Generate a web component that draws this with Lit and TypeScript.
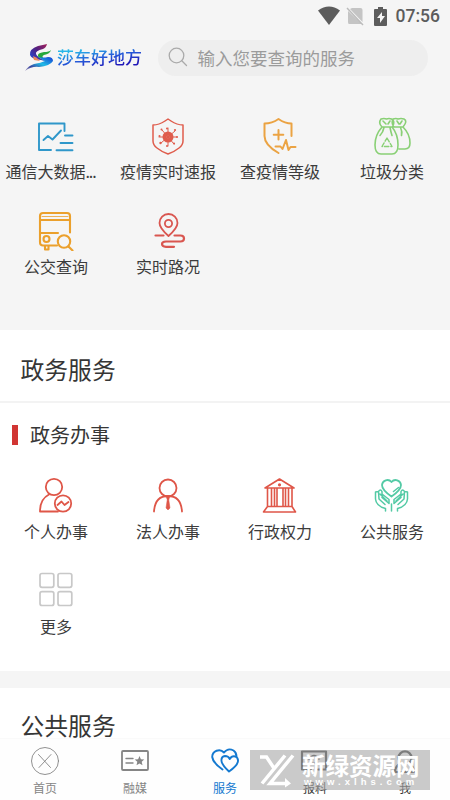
import { LitElement, html, css, svg } from "lit";
import { customElement, property } from "lit/decorators.js";
import { styleMap } from "lit/directives/style-map.js";

// Service icons share a 40x42 canvas and take their colour from the item.
const icons: Record<string, unknown> = {
  data: svg`<g stroke-width="1.900"><path d="M15 36H3V9.500H28.500V17M7.500 26l4.500-4 4.500 3.500L25 16.500M29 21.500h7.500M24.500 29H36.500M20.500 36.300h16"/></g>`,
  virus: svg`<path stroke-width="1.500" d="M20 5l-3 2q-6 4-12 4v16q0 4 4 7 5 4 11 6 6-2 11-6 4-3 4-7V11q-6 0-12-4z"/><circle cx="20" cy="23" r="5.500" fill="currentColor" stroke="none"/><circle cx="20" cy="23" r="1.300" fill="#f5f5f5" stroke="none"/><path stroke-width="1" d="M20 23V14M20 23l7-6M20 23h9M20 23l6 7M20 23v9M20 23l-7 6M20 23h-9M20 23l-6-7"/><g fill="currentColor" stroke="none"><circle cx="19" cy="14.500" r="1"/><circle cx="27" cy="16" r="1.100"/><circle cx="29" cy="23" r="1"/><circle cx="26" cy="29.500" r="1.100"/><circle cx="19" cy="32" r="1"/><circle cx="12.500" cy="29" r="1.200"/><circle cx="11.500" cy="22" r="1"/><circle cx="13.500" cy="15.500" r="1"/></g>`,
  level: svg`<g stroke-width="2"><path d="M31.500 22V9.500Q25 9.500 18.500 5 12 9.500 4.500 9.500V22q0 9 14 17M18.500 16v9.500M13.700 20.700h9.600M15.500 32.500h5l2 2.500 3.500-9 2.500 10 2-3h5"/></g>`,
  bags: svg`<g stroke-width="1.600"><path d="M10 13q-7 8-7 18 0 9 6 9h11q6 0 6-9 0-11-6-18zM10 13Q6 9 9 5q3-1 5.500 0 2.500-1 5 0 4 2 1 8M22 13q-3-4-1-8 3-1 5 0 3-1 6 0 4 2-1 8h-9M31 13q7 7 7 16 0 6-5 6h-6M12 13.500q-1 5-4 8M18 13.500q1 5 2 8M28.500 13.500q2 4 1 8M11 7l3 3M18 7l-2 3M25 7l2 3M30 7l-2 3"/><path stroke-width="1.400" stroke-dasharray="4.500 2" d="M15 24l5 8.500H10z"/></g>`,
  bus: svg`<g stroke-width="2.100"><path d="M21 36.500H7q-3 0-3-3V7q0-3 3-3h24q3 0 3 3v16.500M4 11h30M4 24h18M9 37v3.500h3.500V37"/><circle cx="10.500" cy="30" r="3"/><circle cx="28" cy="32.500" r="6.200"/><path d="M32.500 37.500l4 4"/></g><path stroke-width=".8" d="M6 7.500h26"/>`,
  route: svg`<g stroke-width="1.800"><path d="M20.500 27q-9-8-9-13a9 9 0 0 1 18 0q0 5-9 13z"/><circle cx="20.500" cy="14.500" r="3.600"/><path stroke-width="2.200" d="M7.500 26.500h8M26.500 26.500h6q3.500 0 3.500 3t-3.500 3H18q-4 0-4 2.600t4 2.700h8"/></g>`,
  person: svg`<g stroke-width="1.800"><circle cx="18" cy="13" r="8.200"/><path d="M13 20.500Q4 25 4 37.500h18"/><circle cx="27" cy="29.500" r="8.200"/><path d="M21.500 31l4-3.500 3 3.500 4-3"/></g>`,
  legal: svg`<g stroke-width="1.800"><circle cx="20" cy="14" r="8.500"/><path d="M6 37.500Q7 22 20 22t14 15.500"/><path fill="currentColor" stroke-width=".5" d="M18.500 23h3l-.700 3 1.200 8-2 2-2-2 1.200-8z"/></g>`,
  bank: svg`<g stroke-width="1.600"><path d="M5 14L19.500 5 34 14zM7.500 14v18M11.500 14v18M14.500 14v18M17 14v18M23 14v18M25.500 14v18M28.500 14v18M32 14v18M7.500 32.500H32l3.500 5.500h-32z"/><circle cx="19.500" cy="10.800" r=".8" fill="currentColor"/></g>`,
  care: svg`<g stroke-width="1.500"><path stroke-width="1.800" d="M19.500 22.500q-9.500-6.500-9.500-11.500a5.400 5.400 0 0 1 9.500-3 5.400 5.400 0 0 1 9.500 3q0 5-9.500 11.500z"/><path d="M21.500 17.500l5-4M13.500 37v-2.500Q4 32 3.500 25v-7l3-.5L7 25M6.500 17.500q2-3 3.500 0v6l7 6v-4l-7-5.500M7 25l6 5.500M8 20l7 7M19.500 37v-7M25.500 37v-2.500q9.500-2.500 10-9.500v-7l-3-.5L32 25M32.500 17.500q-2-3-3.500 0v6l-7 6v-4l7-5.500M32 25l-6 5.500M31 20l-7 7"/></g>`,
  more: svg`<g stroke-width="1.700"><rect x="4" y="4.500" width="13.800" height="13.800" rx="2"/><rect x="22" y="4.500" width="13.800" height="13.800" rx="2"/><rect x="4" y="22.700" width="13.800" height="13.800" rx="2"/><rect x="22" y="22.700" width="13.800" height="13.800" rx="2"/></g>`,
};

const navIcons: Record<string, unknown> = {
  home: svg`<circle cx="16" cy="15" r="13.500" stroke-width=".9"/><path stroke-width=".9" d="M9.500 8.500l12 13M22 8.500l-12 13"/>`,
  media: svg`<rect x="3" y="5" width="26" height="19" rx="1" stroke-width="1.800"/><path stroke-width="1.400" d="M7 12.500h7M7 17h7"/><path fill="currentColor" stroke="none" d="M20.500 10l1.400 3.200 3.400.3-2.600 2.300.8 3.400-3-1.800-3 1.800.8-3.400-2.600-2.300 3.400-.3z"/>`,
  service: svg`<g stroke-width="1.900"><path d="M13.500 23.500Q4 17 3.200 11A6.800 6.800 0 0 1 15 6.500M15 6.500q4-5 9.500-2 3 2 3 6"/><path d="M20 25.500Q13 19 12.500 15 12 10.500 16 10q3.500 0 4.800 3 2-3.500 5.500-2.500 3.500 1.500 2.500 5.500-1 4-8.800 9.500z"/></g>`,
  report: svg`<path stroke-width="2.200" d="M12 23.500H3V5.500h24v18h-8"/><path stroke-width="1.600" d="M10 13q5-7 10 0M13 17h6"/>`,
  me: svg`<g stroke-width="2.200"><path d="M11 16a6.500 6.500 0 1 1 10 0"/><path d="M9 19q-3 3-3 7h19q0-4-3-7"/></g>`,
};

interface Service { icon: string; label: string; color: string; clipped?: boolean; }
const featured: Service[] = [
  { icon: "data", label: "通信大数据", color: "#2f97ca", clipped: true },
  { icon: "virus", label: "疫情实时速报", color: "#df5c4c" },
  { icon: "level", label: "查疫情等级", color: "#eba343" },
  { icon: "bags", label: "垃圾分类", color: "#89d075" },
  { icon: "bus", label: "公交查询", color: "#eba02c" },
  { icon: "route", label: "实时路况", color: "#d95650" },
];
const government: Service[] = [
  { icon: "person", label: "个人办事", color: "#df5648" },
  { icon: "legal", label: "法人办事", color: "#df5648" },
  { icon: "bank", label: "行政权力", color: "#df5648" },
  { icon: "care", label: "公共服务", color: "#53caa5" },
  { icon: "more", label: "更多", color: "#c8c8c8" },
];
const tabs = [
  { icon: "home", label: "首页", active: false },
  { icon: "media", label: "融媒", active: false },
  { icon: "service", label: "服务", active: true },
  { icon: "report", label: "报料", active: false },
  { icon: "me", label: "我", active: false },
];

@customElement("service-grid")
export class ServiceGrid extends LitElement {
  @property({ attribute: false }) items: Service[] = [];
  static styles = css`
    :host { display: block; }
    .grid { display: grid; grid-template-columns: repeat(4, 112px); grid-auto-rows: 94.500px; }
    .item { display: flex; flex-direction: column; align-items: center; }
    .icon { width: 40px; height: 42px; flex: none; fill: none; stroke: currentColor; stroke-linecap: round; stroke-linejoin: round; }
    .label { margin-top: 3px; font-size: 16px; line-height: 24px; color: #3c3c3c; white-space: nowrap; }
    .clipped { margin-right: 11px; }
    .dots { letter-spacing: -1.100px; }
  `;
  render() {
    return html`<div class="grid">${this.items.map(
      (s) => html`<div class="item">
        <svg class="icon" viewBox="0 0 40 42" style=${styleMap({ color: s.color })}>${icons[s.icon]}</svg>
        <span class="label ${s.clipped ? "clipped" : ""}">${s.label}${s.clipped ? html`<span class="dots">...</span>` : ""}</span>
      </div>`
    )}</div>`;
  }
}

@customElement("app-root")
export class AppRoot extends LitElement {
  static styles = css`
    :host { display: block; width: 450px; height: 800px; overflow: hidden; font-family: "Noto Sans CJK SC", sans-serif; }
    .page { position: relative; display: flex; flex-direction: column; width: 450px; height: 800px; background: #f5f5f5; overflow: hidden; }
    .status { display: flex; justify-content: flex-end; align-items: center; height: 32px; flex: none; padding-right: 10px; box-sizing: border-box; color: #5c5c5c; }
    .status-icons { width: 72px; height: 22px; }
    .time { font: 500 17.500px/32px Roboto, sans-serif; margin-left: 6px; }
    .header { display: flex; align-items: center; height: 52px; flex: none; padding-left: 24px; }
    .logo { width: 30px; height: 32px; }
    .brand { margin-left: 3px; font-size: 17px; font-weight: 500; line-height: 26px; margin-bottom: 2px; white-space: nowrap; background: linear-gradient(170deg, #27b6e8 25%, #2558d8 52%, #2018b8 78%); -webkit-background-clip: text; background-clip: text; color: transparent; }
    .search { display: flex; align-items: center; width: 270px; height: 36px; margin-left: 16px; padding: 0 0 2px 10px; box-sizing: border-box; border-radius: 18px; background: #eee; color: #9b9b9b; font-size: 17.500px; white-space: nowrap; }
    .lens { width: 20px; height: 20px; margin-right: 9.500px; fill: none; stroke: #aaa; stroke-width: 1.300; stroke-linecap: round; }
    .featured { height: 246px; flex: none; padding-top: 30px; box-sizing: border-box; }
    .panel { background: #fff; flex: none; }
    .government { height: 341px; }
    .public { height: 112px; margin-top: 17px; }
    .title { height: 71px; padding-left: 20.500px; font-size: 23.800px; line-height: 77px; color: #363636; box-sizing: border-box; }
    .public .title { line-height: 74px; }
    .rule { height: 2px; background: #f3f3f3; }
    .subtitle { display: flex; align-items: center; height: 62px; padding: 0 0 9px 12px; color: #363636; font-size: 20px; }
    .mark { width: 6px; height: 20px; margin: 1px 12px 0 0; background: #d13533; }
    .tabs { position: absolute; left: 0; bottom: 0; display: grid; grid-template-columns: repeat(5, 1fr); width: 450px; height: 62px; background: #fefefe; border-top: 1px solid #fafafa; box-sizing: border-box; }
    .tab { display: flex; flex-direction: column; align-items: center; padding-top: 7px; color: #858585; font-size: 12px; line-height: 18px; }
    .tab-icon { width: 32px; height: 30px; margin-bottom: 3px; fill: none; stroke: currentColor; stroke-linecap: round; stroke-linejoin: round; }
    .active { color: #1479d0; }
    .dark { color: #333; }
    .stamp { position: absolute; left: 250px; top: 750px; display: flex; width: 180px; height: 40px; background: rgba(170, 170, 170, .62); color: #fff; }
    .stamp-logo { width: 46px; height: 40px; fill: none; stroke: #fff; stroke-width: 3.500; flex: none; }
    .stamp-text { display: flex; flex-direction: column; padding-left: 6px; white-space: nowrap; }
    .stamp-name { font-size: 23.500px; line-height: 30px; font-weight: 700; height: 26px; }
    .stamp-url { padding-left: 2px; font: 700 9.500px/12px "Liberation Sans", sans-serif; letter-spacing: 4.050px; }
  `;
  render() {
    return html`<main class="page">
      <div class="status">
        <svg class="status-icons" viewBox="0 0 72 22">
          <path fill="#5c5c5c" d="M0 5.500Q11-2.500 22 5.500L11 20z"/>
          <path fill="#c4c4c4" d="M32 4l12.500 13V5q0-2-2-2H34zM30 6l14 13H31q-1 0-1-2z"/>
          <path stroke="#bbb" stroke-width="1.400" d="M29 3l16 17"/>
          <path fill="#5c5c5c" d="M60 2h5v2h3q1 0 1 1v15q0 1-1 1H57q-1 0-1-1V5q0-1 1-1h3z"/>
          <path fill="#f5f5f5" d="M64 7l-5 6h3v5l5-7h-3z"/>
        </svg>
        <span class="time">07:56</span>
      </div>
      <header class="header">
        <svg class="logo" viewBox="0 0 30 32">
          <defs>
            <linearGradient id="upper" x1="1" y1="0" x2="0" y2="1"><stop stop-color="#a62058"/><stop offset=".45" stop-color="#502080"/><stop offset="1" stop-color="#2050e0"/></linearGradient>
            <linearGradient id="lower" x1="1" y1="0" x2="0" y2="1"><stop stop-color="#143bd3"/><stop offset=".45" stop-color="#20bce7"/><stop offset=".75" stop-color="#38439e"/><stop offset="1" stop-color="#aaa0c5"/></linearGradient>
          </defs>
          <path fill="url(#upper)" d="M23 2Q19 3 14 4 5 7 6 13q1 4 11 5l4 1q-8-4-9-7-1-3 7-5 3-1 4-5z"/>
          <path fill="#25a83c" d="M27 8q-2 2-7 2-7 1-6 4 0 2 6 3-3-3 0-4 6-1 7-5z"/>
          <path fill="#ef875b" d="M9 14q4 1 7 5l-6-1z"/>
          <path fill="url(#lower)" d="M15 15q4 4 6 4-4 2-11 3Q4 24 1 29q7-5 14-4 11-1 14-6 0-4-5-4-5 1-9 0z"/>
        </svg>
        <span class="brand">莎车好地方</span>
        <div class="search">
          <svg class="lens" viewBox="0 0 20 20"><circle cx="8.500" cy="8.500" r="7.300"/><path d="M13.800 13.800l4.700 4.700"/></svg>
          <span>输入您要查询的服务</span>
        </div>
      </header>
      <section class="featured"><service-grid .items=${featured}></service-grid></section>
      <section class="panel government">
        <div class="title">政务服务</div>
        <div class="rule"></div>
        <div class="subtitle"><span class="mark"></span>政务办事</div>
        <service-grid .items=${government}></service-grid>
      </section>
      <section class="panel public"><div class="title">公共服务</div></section>
      <nav class="tabs">${tabs.map(
        (t, i) => html`<div class="tab ${t.active ? "active" : i > 2 ? "dark" : ""}">
          <svg class="tab-icon" viewBox="0 0 32 30">${navIcons[t.icon]}</svg><span>${t.label}</span>
        </div>`
      )}</nav>
      <div class="stamp">
        <svg class="stamp-logo" viewBox="0 0 46 40"><path d="M10 7h6.500l8 12M43 5.500L20 33.500h18M35 5.500L12 33.500"/><path fill="#fff" stroke="none" d="M35 28l6 5.500-6 4z"/></svg>
        <div class="stamp-text"><span class="stamp-name">新绿资源网</span><span class="stamp-url">www.xlhs.com</span></div>
      </div>
    </main>`;
  }
}
